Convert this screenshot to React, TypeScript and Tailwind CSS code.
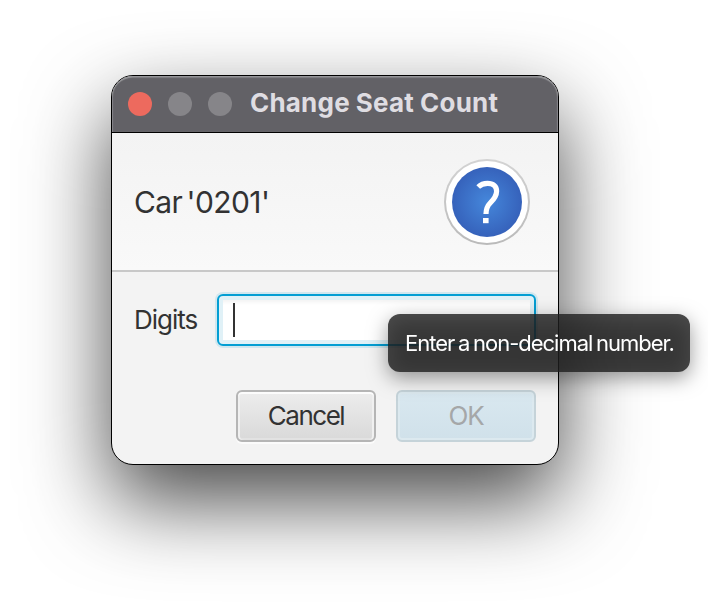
import React from "react";

function TitleBar() {
  return (
    <header className="flex h-[57px] items-center rounded-t-[21px] border-b border-black bg-[#626166] pl-4 shadow-[inset_0_2px_1px_-0.5px_#98989b,inset_1.5px_0_1px_-0.5px_#87868a,inset_-1.5px_0_1px_-0.5px_#87868a]">
      <div className="flex gap-4">
        <span className="size-6 rounded-full bg-[#ed6a5e]" />
        <span className="size-6 rounded-full bg-[#868589]" />
        <span className="size-6 rounded-full bg-[#868589]" />
      </div>
      <h1 className="ml-[18px] whitespace-nowrap pb-[3px] text-[26px] leading-8 font-bold tracking-[0.2px] [word-spacing:-0.3px] text-[#dfdde2]">
        Change Seat Count
      </h1>
    </header>
  );
}

function QuestionIcon() {
  return (
    <svg className="size-[86px]" viewBox="0 0 86 86" fill="none">
      <defs>
        <linearGradient id="ring" x1="0" y1="0" x2="0" y2="1">
          <stop offset="0" stopColor="#d3d3d3" />
          <stop offset="1" stopColor="#bababa" />
        </linearGradient>
        <radialGradient id="disc">
          <stop offset="0" stopColor="#4587db" />
          <stop offset="1" stopColor="#3662bb" />
        </radialGradient>
      </defs>
      <circle cx="43" cy="43" r="43" fill="url(#ring)" />
      <circle cx="43" cy="43" r="41" fill="#fff" />
      <circle cx="43" cy="43" r="35" fill="url(#disc)" />
      <path
        d="M34.2 28C36.6 25.6 39.8 24.3 43.5 24.3C49.3 24.3 52.6 27.4 52.6 32.2C52.6 37 50.2 40 46.2 44C43 47.2 42 49.8 42 55"
        stroke="#fff"
        strokeWidth="5.2"
      />
      <rect x="39" y="59" width="5.6" height="5.2" fill="#fff" />
    </svg>
  );
}

function Tooltip() {
  return (
    <div
      role="tooltip"
      className="absolute left-[388px] top-[314px] flex h-[58px] w-[302px] items-center rounded-[12px] bg-[#1e1e1e]/80 pl-[17px] drop-shadow-[0_6px_10px_rgba(0,0,0,0.5)]"
    >
      <span className="whitespace-nowrap text-[22px] leading-7 tracking-[-1.02px] [word-spacing:-1.4px] text-white">
        Enter a non-decimal number.
      </span>
    </div>
  );
}

export default function App() {
  return (
    <main className="relative h-[612px] w-[708px] overflow-hidden bg-white pl-[111px] pt-[75px] font-['Inter','Liberation_Sans',sans-serif] text-[#323232]">
      <section className="flex h-[390px] w-[448px] flex-col rounded-[22px] border border-black bg-[#f3f3f3] shadow-[0_36px_84px_rgba(0,0,0,0.72)]">
        <TitleBar />
        <div className="flex h-[139px] items-center justify-between border-b-2 border-[#c8c8c8] bg-linear-to-b from-[#f3f3f3] to-[#f9f9f9] pl-[22px] pr-[28px]">
          <p className="whitespace-nowrap text-[30px] leading-9 tracking-[-0.6px] [word-spacing:-3.5px]">Car '0201'</p>
          <QuestionIcon />
        </div>
        <div className="flex pl-[22px] pr-[22px] pt-[22px]">
          <label className="w-[83px] whitespace-nowrap text-[26px] leading-[52px] tracking-[-1px]">Digits</label>
          <div className="h-[52px] flex-1 rounded-[6px] border-2 border-[#039ed3] bg-white px-[14px] py-[7px] shadow-[0_0_0_2px_#d0e7ef,inset_0_0_0_4px_#e0f1f7,inset_0_7px_4px_-1px_#f2f2f2]">
            <div className="h-[34px] w-0.5 bg-[#323232]" />
          </div>
        </div>
        <div className="flex justify-end gap-5 pr-[22px] pt-[44px]">
          <button className="h-[52px] w-[140px] rounded-[6px] border-2 border-[#b5b5b5] bg-linear-to-b from-[#ededed] to-[#d9d9d9] text-[26px] leading-8 tracking-[-1.5px] shadow-[0_2px_0_#fbfbfb,inset_0_2px_0_#fcfcfc,inset_2px_0_0_#f0f0f0,inset_-2px_0_0_#f0f0f0,inset_0_-2px_0_#e2e2e2]">
            Cancel
          </button>
          <button
            disabled
            className="h-[52px] w-[140px] rounded-[6px] border-2 border-[#c5d3d9] bg-linear-to-b from-[#d9e8f0] to-[#d0e1ea] text-[26px] leading-8 tracking-[-1.2px] text-[#a5a7a8] shadow-[inset_0_0_0_2px_#dce9ef]"
          >
            OK
          </button>
        </div>
      </section>
      <Tooltip />
    </main>
  );
}
